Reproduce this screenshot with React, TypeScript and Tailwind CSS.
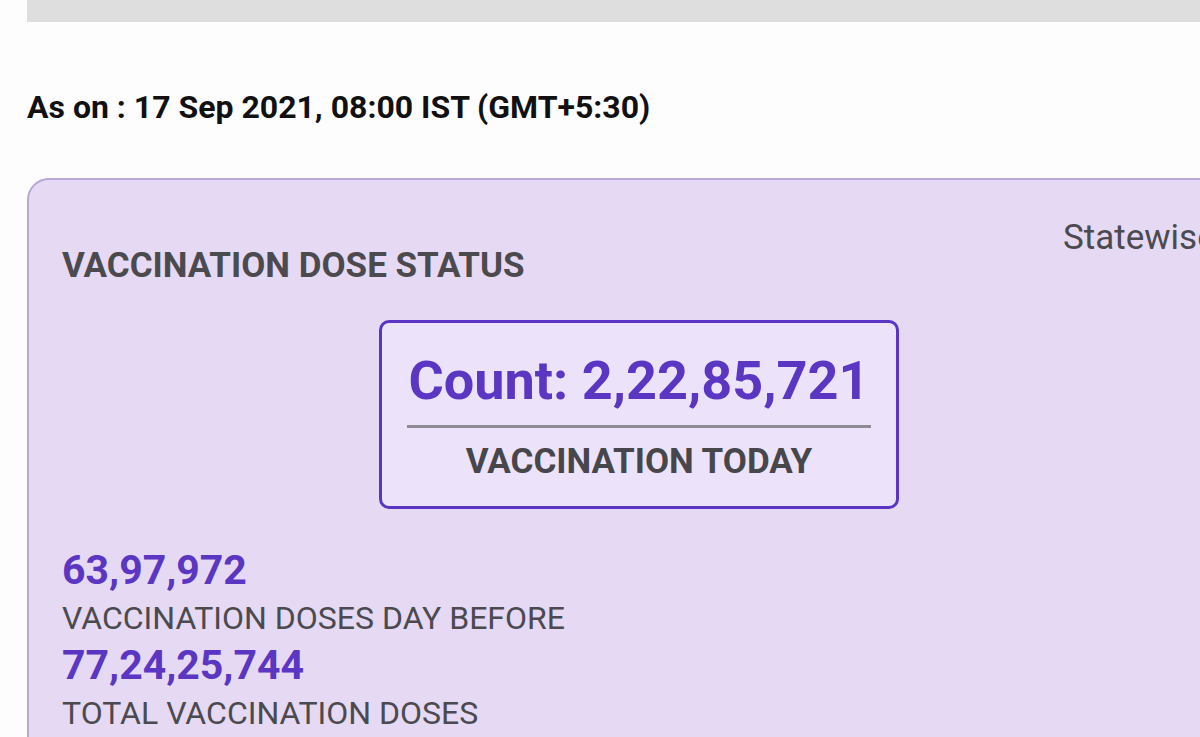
import React from 'react';

const stats = [
  { value: '63,97,972', label: 'VACCINATION DOSES DAY BEFORE' },
  { value: '77,24,25,744', label: 'TOTAL VACCINATION DOSES' },
];

const App: React.FC = () => {
  return (
    <div
      className="w-[1200px] h-[737px] overflow-hidden bg-[#fdfdfd]"
      style={{ fontFamily: 'Roboto, "Noto Sans", sans-serif' }}
    >
      <div className="ml-[27px] h-[22px] bg-[#dedede]"></div>

      <p className="ml-[27px] mt-[66px] text-[32px] leading-[38px] font-bold text-[#111]">
        As on : 17 Sep 2021, 08:00 IST (GMT+5:30)
      </p>

      <div className="ml-[27px] mt-[52px] w-[1300px] h-[700px] border-2 border-[#b9a7d8] rounded-tl-[22px] bg-[#e6d9f3] pt-[37px] pl-[33px] flex">
        <div className="w-[1001px] flex-none pt-[28px]">
          <h2 className="text-[35px] leading-[41px] font-bold text-[#4b4a4f]">VACCINATION DOSE STATUS</h2>

          <div className="ml-[317px] mt-[34px] w-[520px] h-[189px] border-[3px] border-[#5a35c4] rounded-[10px] bg-[#ece3fb] px-[25px] pt-[26px] flex flex-col items-center">
            <p className="text-[54px] leading-[64px] font-bold text-[#5a36c2] whitespace-nowrap">Count: 2,22,85,721</p>
            <div className="w-full h-[3px] bg-[#8f8b95] mt-[12px]"></div>
            <p className="mt-[14px] text-[35px] leading-[40px] font-bold text-[#47464b] whitespace-nowrap">VACCINATION TODAY</p>
          </div>

          <div className="mt-[38px]">
            {stats.map((s, i) => (
              <div key={s.value} className={i > 0 ? 'mt-[5px]' : ''}>
                <p className="text-[41px] leading-[46px] font-bold text-[#5a36c2]">{s.value}</p>
                <p className="mt-[6px] text-[32px] leading-[38px] text-[#4b4a4f]">{s.label}</p>
              </div>
            ))}
          </div>
        </div>
        <p className="text-[35px] leading-[41px] text-[#4b4a4f] whitespace-nowrap">Statewise</p>
      </div>
    </div>
  );
};

export default App;
